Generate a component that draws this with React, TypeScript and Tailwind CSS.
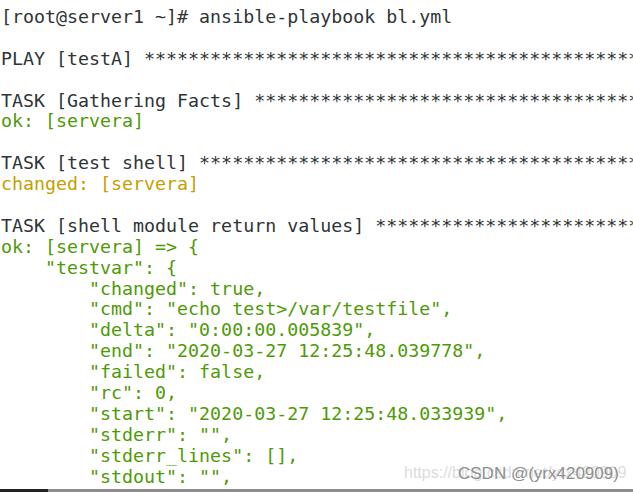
import React from "react";

const STARS = "*".repeat(80);

type Seg = { t: string; c?: "g" | "y" };
type Line = Seg[];

const lines: Line[] = [
  [{ t: "[root@server1 ~]# ansible-playbook bl.yml" }],
  [{ t: "" }],
  [{ t: "PLAY [testA] " + STARS }],
  [{ t: "" }],
  [{ t: "TASK [Gathering Facts] " + STARS }],
  [{ t: "ok: [servera]", c: "g" }],
  [{ t: "" }],
  [{ t: "TASK [test shell] " + STARS }],
  [{ t: "changed: [servera]", c: "y" }],
  [{ t: "" }],
  [{ t: "TASK [shell module return values] " + STARS }],
  [{ t: "ok: [servera] => {", c: "g" }],
  [{ t: '    "testvar": {', c: "g" }],
  [{ t: '        "changed": true,', c: "g" }],
  [{ t: '        "cmd": "echo test>/var/testfile",', c: "g" }],
  [{ t: '        "delta": "0:00:00.005839",', c: "g" }],
  [{ t: '        "end": "2020-03-27 12:25:48.039778",', c: "g" }],
  [{ t: '        "failed": false,', c: "g" }],
  [{ t: '        "rc": 0,', c: "g" }],
  [{ t: '        "start": "2020-03-27 12:25:48.033939",', c: "g" }],
  [{ t: '        "stderr": "",', c: "g" }],
  [{ t: '        "stderr_lines": [],', c: "g" }],
  [{ t: '        "stdout": "",', c: "g" }],
];

export default function App() {
  return (
    <div className="relative w-[633px] h-[492px] bg-white overflow-hidden">
      <div
        className="pt-[7px] pl-px text-[18.3px] leading-[20.9px] text-[#2e3436] whitespace-pre"
        style={{ fontFamily: '"DejaVu Sans Mono", monospace' }}
      >
        {lines.map((ln, i) => (
          <div key={i} className="h-[20.9px] overflow-hidden">
            {ln.map((s, j) => (
              <span
                key={j}
                className={
                  s.c === "g"
                    ? "text-[#4e9a06]"
                    : s.c === "y"
                    ? "text-[#c4a000]"
                    : ""
                }
              >
                {s.t}
              </span>
            ))}
          </div>
        ))}
      </div>
      <div className="absolute left-[404px] top-[461px] text-[16px] text-[#dcdcdc] whitespace-nowrap" style={{ fontFamily: '"Liberation Sans", Arial, sans-serif' }}>
        https://blog.csdn.net/yrx420909
      </div>
      <div className="absolute left-[458px] top-[461px] text-[17px] text-[#8f8f8f] whitespace-nowrap" style={{ fontFamily: '"Liberation Sans", Arial, sans-serif' }}>
        CSDN @(yrx420909)
      </div>
      <div className="absolute left-0 right-0 bottom-0 h-[3px] flex">
        <div className="w-[48px] bg-[#222222]" />
        <div className="flex-1 bg-[#8c8c8c]" />
      </div>
    </div>
  );
}
